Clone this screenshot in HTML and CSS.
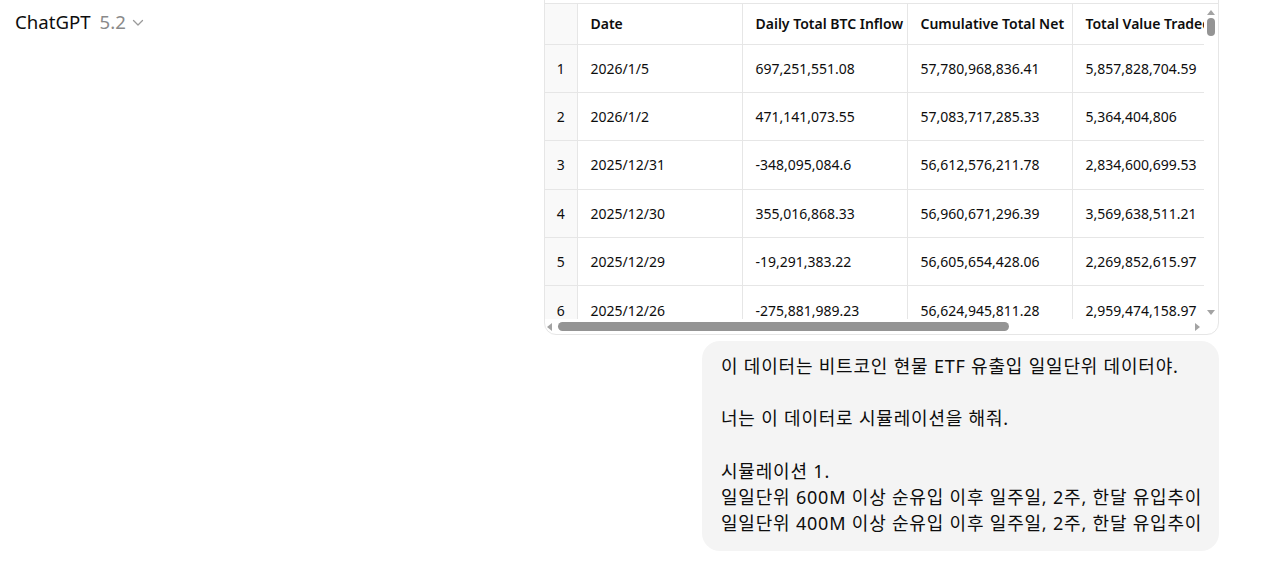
FILE: index.html
```html
<!DOCTYPE html>
<html lang="ko">
<head>
<meta charset="utf-8">
<link rel="stylesheet" href="styles.css">
</head>
<body>
<div class="page">
  <header class="topbar">
    <span class="brand">ChatGPT</span>
    <span class="version">5.2</span>
    <svg class="chev" width="12" height="8" viewBox="0 0 12 8"><path d="M1.5 1.5 L6 6 L10.5 1.5" fill="none" stroke="#9a9a9a" stroke-width="1.3" stroke-linecap="round" stroke-linejoin="round"/></svg>
  </header>
  <main class="chat">
    <div class="tablebox">
      <div class="tabletop"></div>
      <div class="viewport">
        <table class="data">
          <colgroup>
            <col class="c-idx"><col class="c-std"><col class="c-std"><col class="c-std"><col class="c-last">
          </colgroup>
          <thead>
            <tr><th class="idx"></th><th>Date</th><th>Daily Total BTC Inflow</th><th>Cumulative Total Net</th><th>Total Value Traded</th></tr>
          </thead>
          <tbody>
            <tr><td class="idx">1</td><td>2026/1/5</td><td>697,251,551.08</td><td>57,780,968,836.41</td><td>5,857,828,704.59</td></tr>
            <tr><td class="idx">2</td><td>2026/1/2</td><td>471,141,073.55</td><td>57,083,717,285.33</td><td>5,364,404,806</td></tr>
            <tr><td class="idx">3</td><td>2025/12/31</td><td>-348,095,084.6</td><td>56,612,576,211.78</td><td>2,834,600,699.53</td></tr>
            <tr><td class="idx">4</td><td>2025/12/30</td><td>355,016,868.33</td><td>56,960,671,296.39</td><td>3,569,638,511.21</td></tr>
            <tr><td class="idx">5</td><td>2025/12/29</td><td>-19,291,383.22</td><td>56,605,654,428.06</td><td>2,269,852,615.97</td></tr>
            <tr><td class="idx">6</td><td>2025/12/26</td><td>-275,881,989.23</td><td>56,624,945,811.28</td><td>2,959,474,158.97</td></tr>
          </tbody>
        </table>
      </div>
      <div class="vscroll">
        <span class="arrow up"></span>
        <span class="vthumb"></span>
        <span class="vtrack"></span>
        <span class="arrow down"></span>
      </div>
      <div class="hscroll">
        <span class="arrow left"></span>
        <span class="hthumb"></span>
        <span class="htrack"></span>
        <span class="arrow right"></span>
      </div>
      <div class="corner"></div>
    </div>
    <div class="bubble"><p class="line">이 데이터는 비트코인 현물 ETF 유출입 일일단위 데이터야.</p><p class="line blank"></p><p class="line">너는 이 데이터로 시뮬레이션을 해줘.</p><p class="line blank"></p><p class="line">시뮬레이션 1.</p><p class="line">일일단위 600M 이상 순유입 이후 일주일, 2주, 한달 유입추이</p><p class="line">일일단위 400M 이상 순유입 이후 일주일, 2주, 한달 유입추이</p></div>
  </main>
</div>
</body>
</html>
```

FILE: styles.css
```css
* { box-sizing: border-box; }
html, body { margin: 0; padding: 0; background: #fff; }
body {
  font-family: "Noto Sans", "Noto Sans CJK KR", sans-serif;
  color: #0d0d0d;
  height: 564px;
  overflow: hidden;
}
.page {
  display: flex;
  justify-content: space-between;
  align-items: flex-start;
}
.topbar {
  display: flex;
  align-items: center;
  padding: 8px 0 0 15px;
  height: 36px;
}
.brand { font-size: 18.6px; line-height: 26px; color: #0d0d0d; }
.version { font-size: 18.6px; line-height: 26px; color: #8a8a8a; margin-left: 9px; }
.chev { margin-left: 6px; margin-top: 2px; }

.chat {
  width: 675px;
  margin-right: 44px;
  display: flex;
  flex-direction: column;
  align-items: flex-end;
}
.tablebox {
  width: 675px;
  margin-top: -16px;
  border: 1px solid #e6e6e6;
  border-radius: 12px;
  overflow: hidden;
  display: grid;
  grid-template-columns: 1fr 14px;
  grid-template-rows: 19px 315px 15px;
}
.tabletop { grid-column: 1 / 3; border-bottom: 1px solid #e6e6e6; }
.viewport { overflow: hidden; }
.data {
  border-collapse: collapse;
  table-layout: fixed;
  width: 962px;
  font-size: 14px;
}
.c-idx { width: 32px; }
.c-std { width: 165px; }
.c-last { width: 435px; }
.data th, .data td {
  text-align: left;
  padding: 0 13px;
  border-right: 1px solid #e6e6e6;
  border-bottom: 1px solid #e6e6e6;
  white-space: nowrap;
  overflow: hidden;
}
.data th {
  height: 40px;
  font-weight: 600;
}
.data td { height: 48.4px; font-weight: 400; }
.data .idx {
  padding: 0;
  text-align: center;
  background: #f9f9f9;
}
.vscroll {
  display: flex;
  flex-direction: column;
  align-items: center;
  padding: 6px 0 4px;
}
.vthumb {
  width: 8px;
  height: 18px;
  border-radius: 4px;
  background: #949494;
  margin-top: 3px;
}
.vtrack { flex: 1; }
.hscroll {
  display: flex;
  align-items: center;
  padding: 0 4px 0 2px;
}
.hthumb {
  width: 451px;
  height: 9px;
  border-radius: 5px;
  background: #949494;
  margin-left: 6px;
}
.htrack { flex: 1; }
.arrow { width: 0; height: 0; border: 4px solid transparent; }
.arrow.up { border-bottom: 5px solid #a3a3a3; border-top: 0; }
.arrow.down { border-top: 5px solid #a3a3a3; border-bottom: 0; }
.arrow.left { border-right: 5px solid #a3a3a3; border-left: 0; }
.arrow.right { border-left: 5px solid #a3a3a3; border-right: 0; }

.bubble {
  margin-top: 6px;
  background: #f4f4f4;
  border-radius: 18px;
  padding: 12px 14px 15px 19px;
  font-size: 18px;
  letter-spacing: 0.8px;
  width: 517px;
}
.line {
  margin: 0;
  height: 26.2px;
  line-height: 26.2px;
  white-space: nowrap;
}
```
